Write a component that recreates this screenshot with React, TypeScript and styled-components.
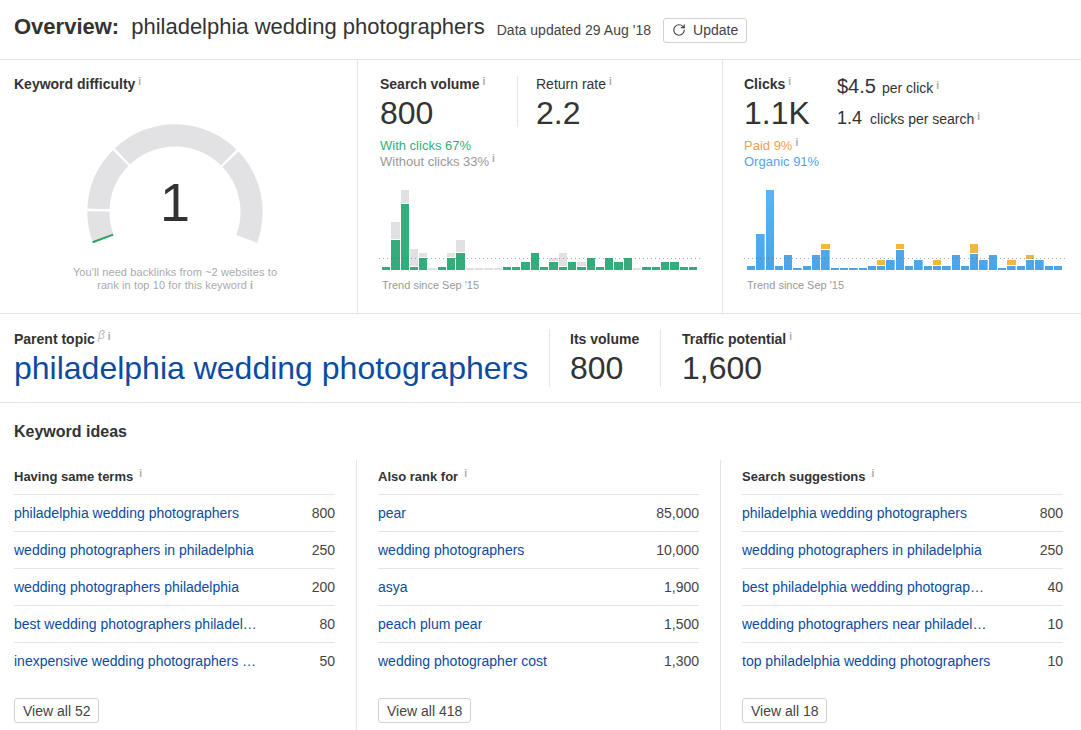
import React from "react";
import styled, { createGlobalStyle } from "styled-components";
import { RotateCw } from "lucide-react";

const GlobalStyle = createGlobalStyle`
  html, body { margin: 0; padding: 0; background: #fff; }
  body {
    font-family: "Liberation Sans", Arial, sans-serif;
    font-size: 14px;
    color: #333;
  }
`;

const Page = styled.div`
  width: 1081px;
  height: 730px;
  overflow: hidden;
`;

const Header = styled.header`
  display: flex;
  align-items: center;
  height: 60px;
  padding: 1px 0 0 14px;
  box-sizing: border-box;
  border-bottom: 1px solid #e5e5e5;
`;

const Title = styled.h1`
  margin: 0 12px 6px 0;
  font-size: 22px;
  font-weight: 400;
  line-height: 26px;
  strong { font-weight: 700; margin-right: 12px; }
`;

const Updated = styled.span`
  margin-right: 12px;
  letter-spacing: 0.03px;
  color: #444;
`;

const Button = styled.button`
  display: inline-flex;
  align-items: center;
  height: 25px;
  padding: 0 8px;
  gap: 7px;
  box-sizing: border-box;
  background: #fff;
  border: 1px solid #d2d2d2;
  border-radius: 3px;
  font: 14px "Liberation Sans", Arial, sans-serif;
  color: #444;
`;

const Panels = styled.section`
  display: grid;
  grid-template-columns: 358px 365px 358px;
  height: 253px;
  border-bottom: 1px solid #e5e5e5;
`;

const Panel = styled.div`
  padding: 16px 21px 0 22px;
  box-sizing: border-box;
  border-right: 1px solid #e5e5e5;
  &:last-child { border-right: 0; padding-left: 21px; }
`;

const GaugePanel = styled(Panel)`
  display: flex;
  flex-direction: column;
  align-items: center;
  padding-left: 14px;
`;

const Label = styled.div<{ $plain?: boolean }>`
  font-size: 14px;
  line-height: 16px;
  font-weight: ${(p) => (p.$plain ? 400 : 700)};
  white-space: nowrap;
`;

const GaugeLabel = styled(Label)`
  align-self: flex-start;
`;

const Info = styled.span`
  margin-left: 3px;
  font-size: 10px;
  font-weight: 700;
  color: #aaa;
  vertical-align: 4px;
  line-height: 0;
`;

const Beta = styled.i`
  margin-left: 3px;
  font-size: 12px;
  font-weight: 400;
  color: #bbb;
  vertical-align: 5px;
  line-height: 0;
`;

const GaugeWrap = styled.div`
  position: relative;
  width: 176px;
  height: 122px;
  margin-top: 32px;
`;

const GaugeValue = styled.div`
  position: absolute;
  left: 0;
  right: 0;
  top: 48px;
  text-align: center;
  font-size: 54px;
  line-height: 60px;
`;

const GaugeNote = styled.p`
  margin: 20px 0 0;
  text-align: center;
  font-size: 11px;
  line-height: 13px;
  letter-spacing: 0.1px;
  color: #aaa;
  white-space: nowrap;
  ${Info} { vertical-align: 0; }
`;

const StatRow = styled.div`
  display: flex;
  align-items: flex-start;
  height: 62px;
`;

const Stat = styled.div<{ $width?: number; $inset?: number }>`
  width: ${(p) => (p.$width ? `${p.$width}px` : "auto")};
  padding-left: ${(p) => p.$inset || 0}px;
  box-sizing: border-box;
`;

const Rule = styled.div`
  width: 1px;
  height: 51px;
  background: #e5e5e5;
`;

const BigNumber = styled.div`
  margin-top: 4px;
  font-size: 32px;
  line-height: 34px;
  white-space: nowrap;
`;

const SideLine = styled.div<{ $mt: number; $gap: number }>`
  margin-top: ${(p) => p.$mt}px;
  line-height: 24px;
  white-space: nowrap;
  b { font-weight: 400; margin-right: ${(p) => p.$gap}px; }
`;

const Legend = styled.div<{ $color: string }>`
  font-size: 13px;
  line-height: 16px;
  color: ${(p) => p.$color};
`;

const ChartWrap = styled.div<{ $inset: number }>`
  margin: 20px 0 0 ${(p) => p.$inset}px;
  width: 315px;
`;

const Chart = styled.div`
  position: relative;
  display: flex;
  align-items: flex-end;
  gap: 1px;
  height: 80px;
`;

const Dots = styled.div`
  position: absolute;
  left: -3px;
  right: -3px;
  bottom: 11px;
  height: 1px;
  background: repeating-linear-gradient(to right, rgba(90, 90, 90, 0.5) 0 1px, transparent 1px 4px);
`;

const Bar = styled.div`
  flex: 1 1 0;
  display: flex;
  flex-direction: column;
  gap: 1px;
`;

const Seg = styled.div<{ $kind: "green" | "grey" | "blue" | "orange" }>`
  background: ${(p) =>
    p.$kind === "green"
      ? "#33ae7b"
      : p.$kind === "grey"
      ? "#e1e1e3"
      : p.$kind === "orange"
      ? "#f1b83d"
      : "linear-gradient(to bottom, #5ab6f0, #4da3e6) bottom / 100% 80px no-repeat"};
`;

const Trend = styled.div`
  margin-top: 9px;
  font-size: 11px;
  line-height: 13px;
  color: #999;
`;

const Parent = styled.section`
  display: flex;
  height: 89px;
  padding: 15px 0 0 14px;
  box-sizing: border-box;
  border-bottom: 1px solid #e5e5e5;
`;

const ParentCell = styled.div<{ $width: number; $inset?: number }>`
  width: ${(p) => p.$width}px;
  height: 58px;
  box-sizing: border-box;
  padding: 2px 0 0 ${(p) => p.$inset || 0}px;
  border-left: ${(p) => (p.$inset ? "1px solid #e5e5e5" : "0")};
`;

const ParentValue = styled.div<{ $link?: boolean }>`
  margin-top: 2px;
  font-size: 32px;
  line-height: 38px;
  white-space: nowrap;
  color: ${(p) => (p.$link ? "#0b4ba1" : "#333")};
`;

const Ideas = styled.section`
  padding-top: 19px;
`;

const IdeasTitle = styled.h2`
  margin: 0 0 18px 14px;
  font-size: 16px;
  line-height: 20px;
  font-weight: 700;
`;

const Columns = styled.div`
  display: grid;
  grid-template-columns: 357px 364px 360px;
`;

const Column = styled.div`
  height: 270px;
  padding: 9px 21px 0;
  box-sizing: border-box;
  border-right: 1px solid #e5e5e5;
  &:first-child { padding-left: 14px; }
  &:last-child { border-right: 0; padding-right: 18px; }
`;

const ColumnHead = styled.div`
  height: 25px;
  font-size: 13px;
  line-height: 16px;
  font-weight: 700;
  border-bottom: 1px solid #e5e5e5;
  ${Info} { margin-left: 6px; }
`;

const Row = styled.div`
  display: flex;
  justify-content: space-between;
  align-items: center;
  height: 37px;
  box-sizing: border-box;
  border-bottom: 1px solid #e5e5e5;
  &:last-of-type { border-bottom: 0; height: 36px; }
`;

const RowLink = styled.a`
  max-width: 249px;
  overflow: hidden;
  text-overflow: ellipsis;
  white-space: nowrap;
  color: #0b4ba1;
`;

const RowCount = styled.span`
  color: #444;
`;

const ViewAll = styled(Button)`
  margin-top: 19px;
  height: 25px;
`;

const greenBars: [number, number][] = [
  [3, 0], [30, 48], [66, 80], [3, 21], [12, 17], [0, 2], [3, 0], [12, 17], [17, 30],
  [0, 2], [0, 2], [0, 2], [0, 2], [3, 0], [3, 0], [8, 0], [17, 0], [3, 0], [8, 12],
  [3, 17], [8, 0], [3, 8], [12, 0], [3, 0], [12, 0], [8, 0], [12, 0], [0, 2], [3, 0],
  [3, 0], [8, 0], [8, 0], [3, 0], [3, 0],
];

const blueBars: [number, number][] = [
  [4, 0], [36, 0], [80, 0], [4, 0], [15, 0], [2, 0], [4, 0], [15, 0], [20, 26],
  [2, 0], [2, 0], [2, 0], [2, 0], [4, 0], [4, 10], [10, 0], [20, 26], [4, 0], [10, 0],
  [4, 0], [4, 10], [4, 0], [15, 0], [4, 0], [16, 26], [10, 0], [15, 0], [2, 0], [4, 10],
  [4, 0], [10, 15], [10, 0], [4, 0], [4, 0],
];

const columns = [
  {
    title: "Having same terms",
    more: "View all 52",
    rows: [
      ["philadelphia wedding photographers", "800"],
      ["wedding photographers in philadelphia", "250"],
      ["wedding photographers philadelphia", "200"],
      ["best wedding photographers philadelphia", "80"],
      ["inexpensive wedding photographers philadelphia", "50"],
    ],
  },
  {
    title: "Also rank for",
    more: "View all 418",
    rows: [
      ["pear", "85,000"],
      ["wedding photographers", "10,000"],
      ["asya", "1,900"],
      ["peach plum pear", "1,500"],
      ["wedding photographer cost", "1,300"],
    ],
  },
  {
    title: "Search suggestions",
    more: "View all 18",
    rows: [
      ["philadelphia wedding photographers", "800"],
      ["wedding photographers in philadelphia", "250"],
      ["best philadelphia wedding photographers", "40"],
      ["wedding photographers near philadelphia", "10"],
      ["top philadelphia wedding photographers", "10"],
    ],
  },
];

const CX = 88;
const CY = 88;
const R = 87.7;
const r = 65.5;

const point = (radius: number, deg: number) => {
  const a = (deg * Math.PI) / 180;
  return `${(CX + radius * Math.sin(a)).toFixed(2)} ${(CY - radius * Math.cos(a)).toFixed(2)}`;
};

const arc = (from: number, to: number) =>
  `M${point(R, from)} A${R} ${R} 0 0 1 ${point(R, to)} L${point(r, to)} A${r} ${r} 0 0 0 ${point(r, from)} Z`;

const Gauge: React.FC = () => (
  <GaugeWrap>
    <svg width="176" height="122" viewBox="0 0 176 122">
      <path d={arc(-110.5, -89.5)} fill="#e2e2e4" />
      <path d={arc(-87.7, -45.2)} fill="#e2e2e4" />
      <path d={arc(-43.4, 44.6)} fill="#e2e2e4" />
      <path d={arc(46.4, 110.5)} fill="#e2e2e4" />
      <line x1={5.6} y1={118.2} x2={26.2} y2={110.6} stroke="#2fa35f" strokeWidth="2" />
    </svg>
    <GaugeValue>1</GaugeValue>
  </GaugeWrap>
);

const TrendChart: React.FC<{
  bars: [number, number][];
  main: "green" | "blue";
  top: "grey" | "orange";
  inset: number;
}> = ({ bars, main, top, inset }) => (
  <ChartWrap $inset={inset}>
    <Chart>
      {bars.map(([low, high], i) => (
        <Bar key={i}>
          {high > 0 && <Seg $kind={top} style={{ height: low > 0 ? high - low - 1 : high }} />}
          {low > 0 && <Seg $kind={main} style={{ height: low }} />}
        </Bar>
      ))}
      <Dots />
    </Chart>
    <Trend>Trend since Sep '15</Trend>
  </ChartWrap>
);

export default function App() {
  return (
    <Page>
      <GlobalStyle />
      <Header>
        <Title>
          <strong>Overview:</strong>philadelphia wedding photographers
        </Title>
        <Updated>Data updated 29 Aug '18</Updated>
        <Button>
          <RotateCw size={14} strokeWidth={2} />
          Update
        </Button>
      </Header>

      <Panels>
        <GaugePanel>
          <GaugeLabel>
            Keyword difficulty<Info>i</Info>
          </GaugeLabel>
          <Gauge />
          <GaugeNote>
            You'll need backlinks from ~2 websites to
            <br />
            rank in top 10 for this keyword<Info>i</Info>
          </GaugeNote>
        </GaugePanel>

        <Panel>
          <StatRow>
            <Stat $width={137}>
              <Label>
                Search volume<Info>i</Info>
              </Label>
              <BigNumber>800</BigNumber>
            </Stat>
            <Rule />
            <Stat $inset={18}>
              <Label $plain>
                Return rate<Info>i</Info>
              </Label>
              <BigNumber>2.2</BigNumber>
            </Stat>
          </StatRow>
          <Legend $color="#2fb083">With clicks 67%</Legend>
          <Legend $color="#999">
            Without clicks 33%<Info>i</Info>
          </Legend>
          <TrendChart bars={greenBars} main="green" top="grey" inset={2} />
        </Panel>

        <Panel>
          <StatRow>
            <Stat $width={93}>
              <Label>
                Clicks<Info>i</Info>
              </Label>
              <BigNumber>1.1K</BigNumber>
            </Stat>
            <Stat>
              <SideLine $mt={-2} $gap={6}>
                <b style={{ fontSize: 20 }}>$4.5</b>per click<Info>i</Info>
              </SideLine>
              <SideLine $mt={6} $gap={8}>
                <b style={{ fontSize: 18 }}>1.4</b>clicks per search<Info>i</Info>
              </SideLine>
            </Stat>
          </StatRow>
          <Legend $color="#f0a050">
            Paid 9%<Info>i</Info>
          </Legend>
          <Legend $color="#5a9fe8">Organic 91%</Legend>
          <TrendChart bars={blueBars} main="blue" top="orange" inset={3} />
        </Panel>
      </Panels>

      <Parent>
        <ParentCell $width={535}>
          <Label>
            Parent topic<Beta>β</Beta>
            <Info>i</Info>
          </Label>
          <ParentValue $link>philadelphia wedding photographers</ParentValue>
        </ParentCell>
        <ParentCell $width={111} $inset={20}>
          <Label>Its volume</Label>
          <ParentValue>800</ParentValue>
        </ParentCell>
        <ParentCell $width={200} $inset={21}>
          <Label>
            Traffic potential<Info>i</Info>
          </Label>
          <ParentValue>1,600</ParentValue>
        </ParentCell>
      </Parent>

      <Ideas>
        <IdeasTitle>Keyword ideas</IdeasTitle>
        <Columns>
          {columns.map((col) => (
            <Column key={col.title}>
              <ColumnHead>
                {col.title}
                <Info>i</Info>
              </ColumnHead>
              {col.rows.map(([name, count]) => (
                <Row key={name}>
                  <RowLink>{name}</RowLink>
                  <RowCount>{count}</RowCount>
                </Row>
              ))}
              <ViewAll>{col.more}</ViewAll>
            </Column>
          ))}
        </Columns>
      </Ideas>
    </Page>
  );
}
